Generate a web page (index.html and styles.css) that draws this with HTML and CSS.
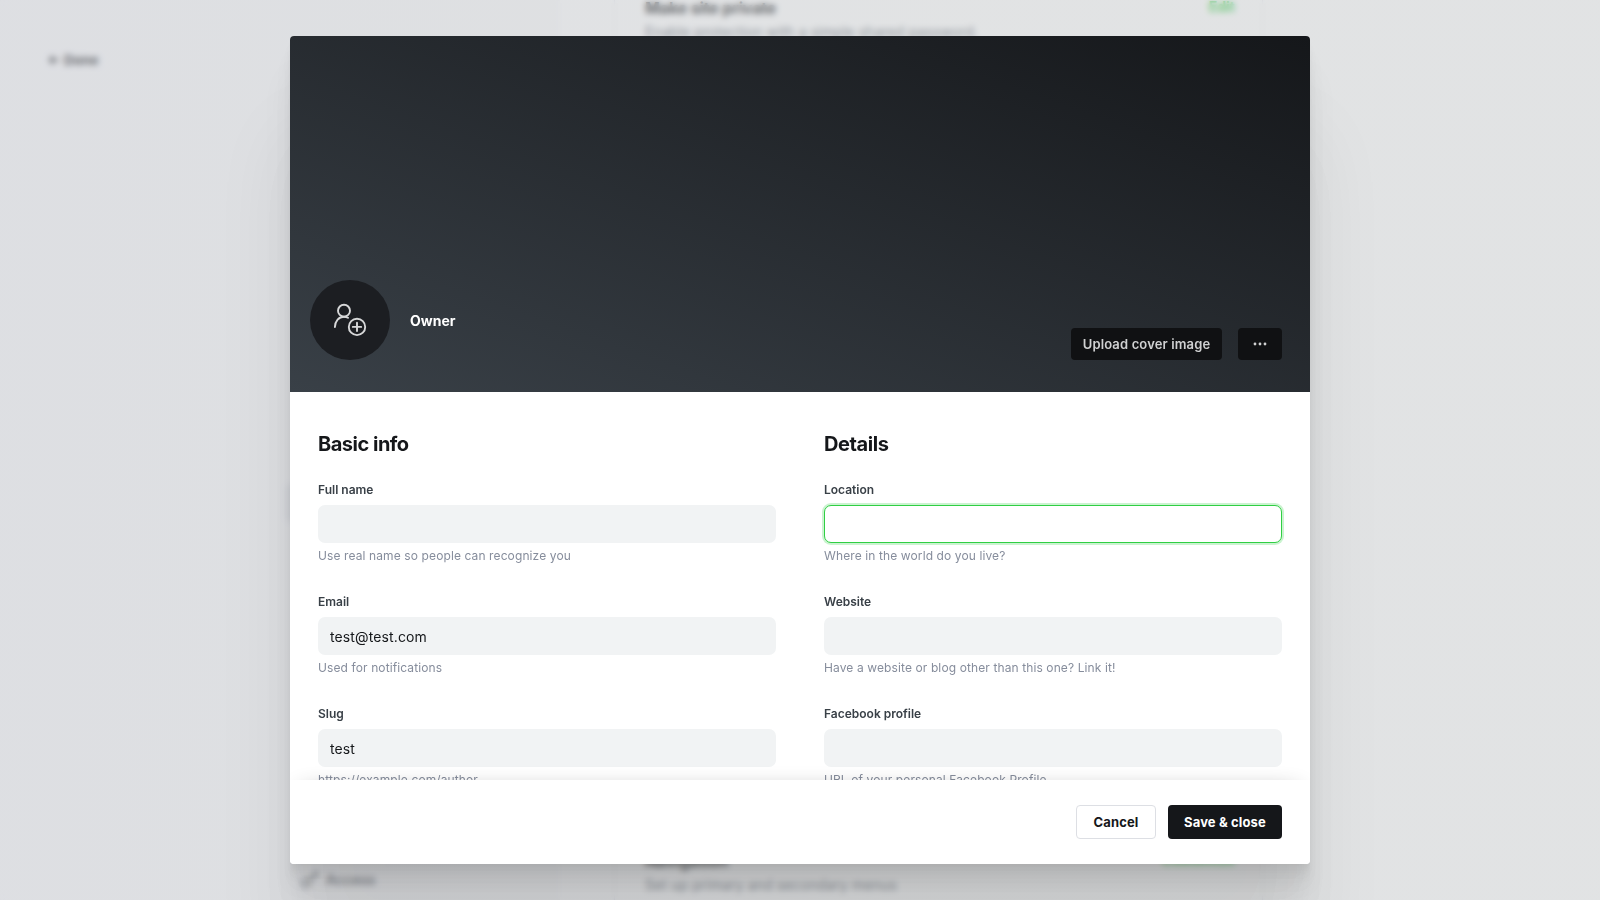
FILE: index.html
```html
<!DOCTYPE html>
<html lang="en">
<head>
<meta charset="utf-8">
<title>Settings</title>
<link rel="stylesheet" href="styles.css">
</head>
<body>
<div class="page">
  <aside class="sidebar">
    <div class="done"><svg width="10" height="10" viewBox="0 0 10 10" fill="none" stroke="currentColor" stroke-width="1.8"><path d="M9.500 5H1M4.500 1 .8 5l3.700 4"/></svg><span>Done</span></div>
    <nav class="nav">
      <div class="nav-active"></div>
      <div class="nav-item"><svg width="18" height="18" viewBox="0 0 18 18" fill="none" stroke="currentColor" stroke-width="1.700"><circle cx="5" cy="13" r="4"/><path d="M8 10 16.500 1.500M12.500 5.500 15 8M15 3l2 2"/></svg><span>Access</span></div>
    </nav>
  </aside>
  <main class="content">
    <section class="card card-top">
      <div class="card-row"><h3>Make site private</h3><span class="action">Edit</span></div>
      <p>Enable protection with a simple shared password.</p>
    </section>
    <section class="card card-bottom">
      <div class="card-row"><h3>Navigation</h3><span class="action">Customize</span></div>
      <p>Set up primary and secondary menus</p>
    </section>
  </main>
</div>
<div class="overlay">
  <div class="modal">
    <header class="hero">
      <div class="avatar"><svg width="34" height="34" viewBox="0 0 34 34" fill="none" stroke="currentColor" stroke-width="1.9" stroke-linecap="round"><circle cx="11" cy="7.700" r="6"/><path d="M1.900 24c.2-6.200 4-10.300 9-10.300 1.600 0 2.900.3 4.100 1"/><circle cx="24" cy="23.900" r="8.200"/><path d="M24 19.700v8.400M19.800 23.900h8.400"/></svg></div>
      <div class="role">Owner</div>
      <div class="hero-actions">
        <button class="dark-btn upload">Upload cover image</button>
        <button class="dark-btn more"><svg width="14" height="4" viewBox="0 0 14 4" fill="currentColor"><circle cx="2" cy="2" r="1.400"/><circle cx="7" cy="2" r="1.400"/><circle cx="12" cy="2" r="1.400"/></svg></button>
      </div>
    </header>
    <div class="form">
      <section class="column">
        <h2>Basic info</h2>
        <div class="field"><label>Full name</label><div class="input"></div><small>Use real name so people can recognize you</small></div>
        <div class="field"><label>Email</label><div class="input">test@test.com</div><small>Used for notifications</small></div>
        <div class="field"><label>Slug</label><div class="input">test</div><small>https://example.com/author</small></div>
      </section>
      <section class="column">
        <h2>Details</h2>
        <div class="field"><label>Location</label><div class="input focused"></div><small>Where in the world do you live?</small></div>
        <div class="field"><label>Website</label><div class="input"></div><small>Have a website or blog other than this one? Link it!</small></div>
        <div class="field"><label>Facebook profile</label><div class="input"></div><small>URL of your personal Facebook Profile</small></div>
      </section>
    </div>
    <footer class="footer">
      <button class="btn cancel">Cancel</button>
      <button class="btn save">Save &amp; close</button>
    </footer>
  </div>
</div>
</body>
</html>
```
FILE: styles.css
```css
* { box-sizing: border-box; }
body { margin: 0; height: 900px; overflow: hidden; font-family: Inter, "Liberation Sans", sans-serif; color: #15171a; background: #fff; }
h2, h3, p { margin: 0; }
button { font-family: inherit; margin: 0; padding: 0; border: 0; }

.page { display: flex; height: 900px; overflow: hidden; }
.sidebar { width: 560px; background: #fafafb; }
.done { display: flex; align-items: center; gap: 5px; padding: 49px 0 0 49px; height: 70px; font-size: 13.5px; font-weight: 700; line-height: 20px; }
.nav { margin-left: 286px; padding-top: 414px; }
.nav-active { width: 220px; height: 38px; border-radius: 5px; background: #e4e6ea; }
.nav-item { display: flex; align-items: center; gap: 7px; margin-top: 347px; padding-left: 15px; height: 20px; font-size: 14px; font-weight: 500; color: #394047; }
.content { width: 1040px; padding-left: 54px; }
.card { width: 649px; border: 1px solid #e6e9eb; border-radius: 5px; padding: 0 27px 0 30px; }
.card-top { height: 66px; margin-top: -4px; border-top: 0; }
.card-bottom { height: 100px; margin-top: 760px; padding-top: 26px; }
.card-row { display: flex; justify-content: space-between; }
.card h3 { font-size: 16px; line-height: 25px; font-weight: 700; letter-spacing: -.15px; }
.card p { font-size: 14px; line-height: 22px; letter-spacing: .1px; color: #56606b; }
.action { font-size: 14px; line-height: 22px; font-weight: 700; color: #30cf43; }

.overlay { position: fixed; inset: 0; padding-top: 36px; background: linear-gradient(to right, rgba(192,195,202,.5), rgba(196,199,201,.5) 60%); backdrop-filter: blur(3px); }
.modal { display: flex; flex-direction: column; width: 1020px; height: 828px; margin: 0 auto; overflow: hidden; background: #fff; border-radius: 4px;
  box-shadow: 0 2.8px 2.2px rgba(0,0,0,.02), 0 6.7px 5.3px rgba(0,0,0,.028), 0 12.5px 10px rgba(0,0,0,.035), 0 22.3px 17.9px rgba(0,0,0,.042), 0 41.8px 33.4px rgba(0,0,0,.055), 0 100px 80px rgba(0,0,0,.08); }
.hero { display: flex; align-items: flex-end; height: 356px; flex: none; padding: 0 28px 32px 20px; background: linear-gradient(to top right, #394047, #15171a); }
.avatar { display: flex; align-items: center; justify-content: center; width: 80px; height: 80px; border-radius: 50%; background: #1c1e22; color: #d7d8d9; }
.role { margin-left: 20px; height: 80px; line-height: 82px; font-size: 14px; font-weight: 700; color: #fff; }
.hero-actions { display: flex; gap: 16px; margin-left: auto; }
.dark-btn { display: flex; align-items: center; justify-content: center; height: 32px; padding-bottom: 1px; border-radius: 4px; background: #101113; color: #d0d1d2; font-size: 13px; letter-spacing: .14px; font-weight: 600; }
.upload { width: 151px; }
.more { width: 44px; padding-bottom: 0; }

.form { display: grid; grid-template-columns: 458px 458px; column-gap: 48px; height: 388px; flex: none; padding: 38px 28px 0; overflow: hidden; }
.column h2 { font-size: 20px; line-height: 28px; font-weight: 700; letter-spacing: -.5px; margin-bottom: 21px; }
.column:last-child h2 { letter-spacing: -.4px; }
.field { display: flex; flex-direction: column; height: 112px; }
.field label { padding-top: 1px; font-size: 12px; line-height: 20px; font-weight: 600; color: #394047; }
.input { height: 38px; margin-top: 5px; flex: none; padding: 0 12px; border-radius: 7px; background: #f1f3f4; font-size: 14px; line-height: 40px; letter-spacing: .12px; color: #15171a; }
.focused { background: #fff; border: 1px solid #30cf43; box-shadow: 0 0 0 2px rgba(48,207,67,.25); }
.field small { margin-top: 3px; font-size: 12px; line-height: 20px; letter-spacing: .11px; color: #868d9c; }

.footer { position: relative; display: flex; flex: none; justify-content: flex-end; align-items: center; gap: 12px; height: 84px; padding: 0 28px; background: #fff; box-shadow: 0 0 24px -13px rgba(0,0,0,.45); }
.btn { height: 34px; padding-bottom: 1px; border-radius: 4px; font-size: 13px; font-weight: 700; letter-spacing: .14px; }
.cancel { width: 80px; background: #fff; border: 1px solid #dddfe4; color: #15171a; }
.save { width: 114px; background: #15171a; color: #fff; }
```
